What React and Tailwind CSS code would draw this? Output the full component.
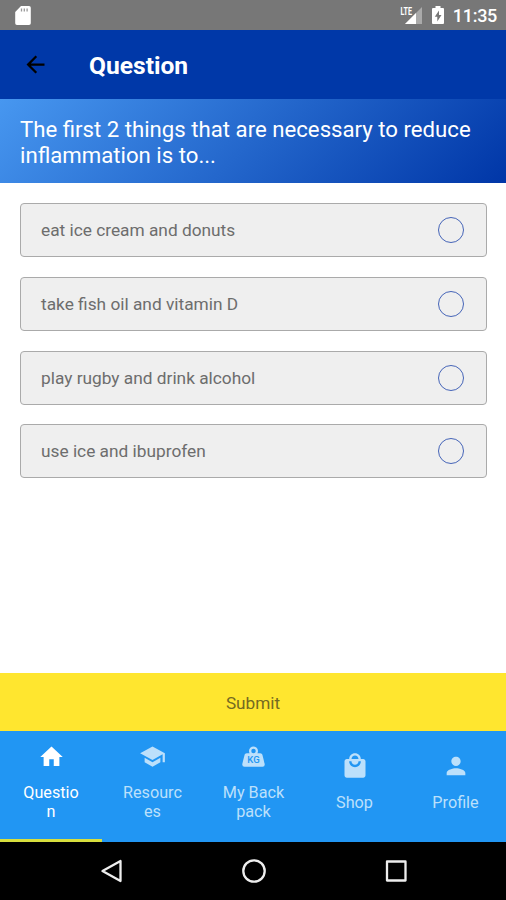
const options = [
  'eat ice cream and donuts',
  'take fish oil and vitamin D',
  'play rugby and drink alcohol',
  'use ice and ibuprofen',
];

function HomeIcon() {
  return <svg className="size-[27px]" viewBox="0 0 24 24" fill="currentColor"><path d="M10 20.500v-6h4v6h5v-8h3L12 3 2 12.500h3v8z" /></svg>;
}
function SchoolIcon() {
  return <svg className="size-[27px]" viewBox="0 0 24 24" fill="currentColor"><path d="M5 13.180v4L12 21l7-3.820v-4L12 17l-7-3.820zM12 3 1 9l11 6 9-4.910V17h2V9L12 3z" /></svg>;
}
function WeightIcon() {
  return (
    <svg className="size-[27px]" viewBox="0 0 24 24" fill="currentColor">
      <path fillRule="evenodd" d="M12 3a4 4 0 0 1 4 4c0 .73-.19 1.410-.54 2H18c.95 0 1.750.67 1.950 1.560C21.960 18.570 22 18.780 22 19a2 2 0 0 1-2 2H4a2 2 0 0 1-2-2c0-.22.04-.43 2.050-8.440C4.250 9.670 5.050 9 6 9h2.540A3.900 3.900 0 0 1 8 7a4 4 0 0 1 4-4m0 2a2 2 0 1 0 0 4 2 2 0 0 0 0-4" />
      <text x="12" y="18.200" textAnchor="middle" textLength="11" lengthAdjust="spacingAndGlyphs" fontSize="8.500" fontWeight="500" className="fill-[#2196f3]">KG</text>
    </svg>
  );
}
function BagIcon() {
  return <svg className="size-[28px]" viewBox="0 0 24 24" fill="currentColor"><path d="M19 6h-2c0-2.760-2.240-5-5-5S7 3.240 7 6H5c-1.100 0-1.990.9-1.990 2L3 20c0 1.100.9 2 2 2h14c1.100 0 2-.9 2-2V8c0-1.100-.9-2-2-2zm-7-3c1.660 0 3 1.340 3 3H9c0-1.660 1.340-3 3-3zm0 10c-2.760 0-5-2.240-5-5h2c0 1.660 1.340 3 3 3s3-1.340 3-3h2c0 2.760-2.240 5-5 5z" /></svg>;
}
function PersonIcon() {
  return <svg className="size-[28px]" viewBox="0 0 24 24" fill="currentColor"><path d="M12 12c2.210 0 4-1.790 4-4s-1.790-4-4-4-4 1.790-4 4 1.790 4 4 4zm0 2c-2.670 0-8 1.340-8 4v2h16v-2c0-2.660-5.330-4-8-4z" /></svg>;
}

const tabs = [
  { lines: ['Questio', 'n'], Icon: HomeIcon, active: true },
  { lines: ['Resourc', 'es'], Icon: SchoolIcon },
  { lines: ['My Back', 'pack'], Icon: WeightIcon },
  { lines: ['Shop'], Icon: BagIcon },
  { lines: ['Profile'], Icon: PersonIcon },
];

function StatusBar() {
  return (
    <div className="flex h-[30px] items-center bg-[#777777] pl-[15px] pr-[9px] text-white">
      <svg className="h-[20px] w-[16px]" viewBox="0 0 16 20">
        <path d="M6 1h8a1.800 1.800 0 0 1 1.800 1.800v15.400A1.800 1.800 0 0 1 14 20H2a1.800 1.800 0 0 1-1.800-1.800V7z" fill="#fff" />
        <path d="M6.500 3.500v3M9.300 3.500v3M12.100 3.500v3" stroke="#999" strokeWidth="1.300" />
      </svg>
      <div className="flex-1" />
      <svg className="h-[20px] w-[23px]" viewBox="0 0 23 20">
        <path d="M22 2v17H5z" fill="#aaa" />
        <path d="M16 8v11H5z" fill="#fff" />
        <path d="M0 0h12v10H0z" fill="#777" />
        <text x="0.500" y="9.500" textLength="11.500" lengthAdjust="spacingAndGlyphs" fontSize="10.500" fontWeight="700" fill="#fff">LTE</text>
      </svg>
      <svg className="ml-[9px] h-[20px] w-[12px]" viewBox="0 0 12 20">
        <path d="M3.500 1h5v2H11a1 1 0 0 1 1 1v14a1 1 0 0 1-1 1H1a1 1 0 0 1-1-1V4a1 1 0 0 1 1-1h2.500z" fill="#fff" />
        <path d="M7 5.500 2.800 11.800h2.500v4.700L9.500 10H7z" fill="#777" />
      </svg>
      <span className="ml-[9px] mt-[2px] text-[18px] leading-5 font-medium tracking-[-0.300px]">11:35</span>
    </div>
  );
}

export default function App() {
  return (
    <div className="flex h-[900px] w-[506px] flex-col overflow-hidden bg-white font-[Roboto,sans-serif]">
      <StatusBar />
      <header className="flex h-[69px] items-center bg-[#0038a8] pl-[22px]">
        <svg className="size-[27px]" viewBox="0 0 24 24"><path d="M20 11H7.830l5.590-5.590L12 4l-8 8 8 8 1.410-1.410L7.830 13H20v-2z" /></svg>
        <h1 className="ml-[40px] mt-[2px] text-[24.600px] leading-8 font-bold text-white">Question</h1>
      </header>
      <section className="h-[84px] bg-[linear-gradient(135deg,#4797f0,#0036a7)] pl-[20px] pt-[18px] text-[22.200px] leading-[25.500px] whitespace-nowrap text-white">
        <p>The first 2 things that are necessary to reduce</p>
        <p>inflammation is to...</p>
      </section>
      <main className="flex flex-1 flex-col gap-[19.800px] pl-[20px] pr-[19px] pt-5">
        {options.map((o) => (
          <div key={o} className="flex h-[54px] items-center justify-between rounded-[4px] border-[1.500px] border-[#aaaaaa] bg-[#efefef] pl-[20px] pr-[22px] text-[17.300px] text-[#6d6d6d]">
            <span className="pt-[2px]">{o}</span>
            <span className="size-[26px] rounded-full border border-[#4665b8]" />
          </div>
        ))}
      </main>
      <button className="h-[58px] bg-[#ffe62f] pt-[3px] text-[17.200px] text-[#746a22]">Submit</button>
      <nav className="grid h-[111px] grid-cols-[102px_101px_101px_101px_101px] bg-[#2196f3] text-[16.200px] leading-[19px]">
        {tabs.map(({ lines, Icon, active }) => (
          <div key={lines[0]} className={active ? 'flex flex-col items-center justify-center border-b-[3px] border-[#d8df3e] pb-[6px] text-white' : 'flex flex-col items-center justify-center border-b-[3px] border-transparent pb-[6px] text-[#bce0fb]'}>
            <Icon />
            <div className="mt-[13px] text-center">{lines.map((l) => <div key={l}>{l}</div>)}</div>
          </div>
        ))}
      </nav>
      <div className="flex h-[58px] items-center justify-between bg-black pl-[100px] pr-[98px]">
        <svg className="size-[24px]" viewBox="0 0 24 24" fill="none" stroke="#eee" strokeWidth="2.300" strokeLinejoin="round"><path d="M20.500 2v20L2.500 12z" /></svg>
        <svg className="size-[24px]" viewBox="0 0 24 24" fill="none" stroke="#eee" strokeWidth="2.300"><circle cx="12" cy="12" r="10.700" /></svg>
        <svg className="size-[24px]" viewBox="0 0 24 24" fill="none" stroke="#eee" strokeWidth="2.300" strokeLinejoin="round"><path d="M3 2.500h18.500v19H3z" /></svg>
      </div>
    </div>
  );
}
